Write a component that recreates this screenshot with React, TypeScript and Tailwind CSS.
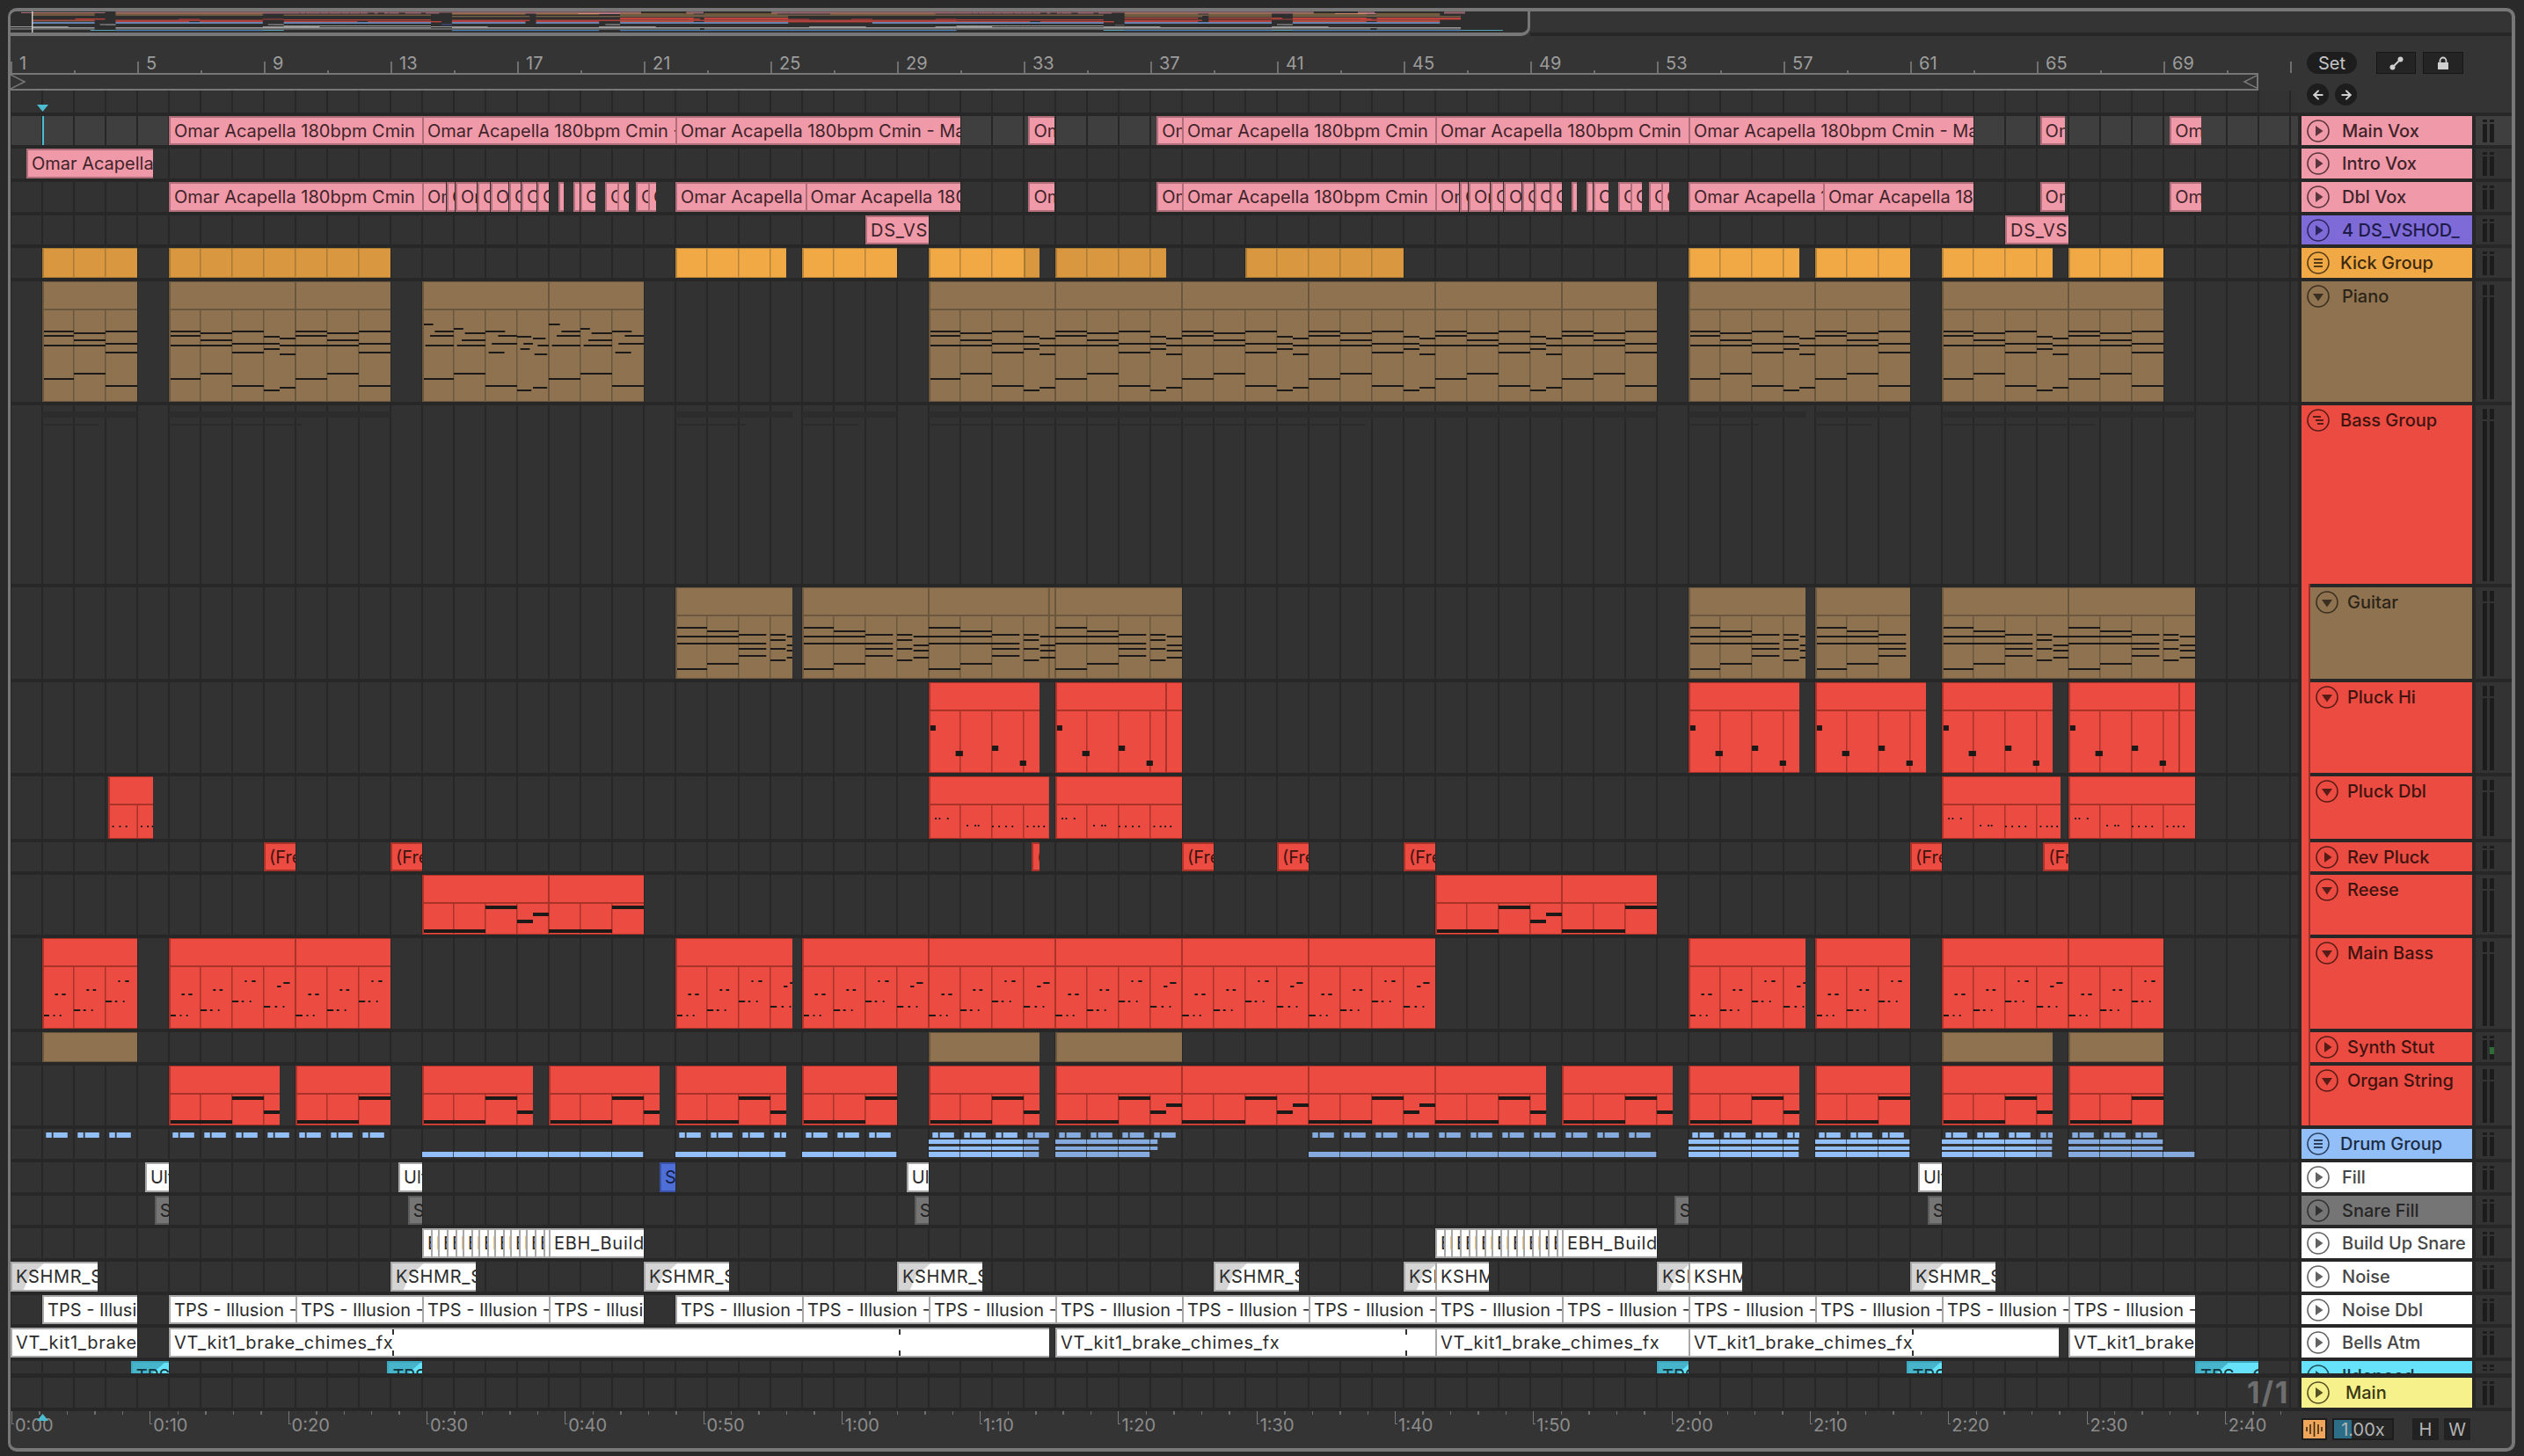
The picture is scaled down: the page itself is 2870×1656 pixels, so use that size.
import React from "react";
import { ArrowLeft, ArrowRight } from "lucide-react";

const BAR = 36;
const GRID =
  "bg-[linear-gradient(90deg,#272727_2px,transparent_2px)] bg-[length:36px_100%] bg-[position:-1px_0]";

type Note = [number, number, number];
type Clip = {
  s: number;
  e: number;
  t?: string;
  c: string;
  kind?: string;
  d?: number[];
  fade?: boolean;
  m?: number[];
};
type Track = {
  name: string;
  h: number;
  bg: string;
  fg: string;
  icon: "play" | "group" | "bass" | "down";
  child?: boolean;
  sel?: boolean;
  textMl?: string;
  ov?: number;
  clips: Clip[];
};

const PAL: Record<string, { cls: string; fill: string; line: string }> = {
  pink: { cls: "bg-[#f099a8] border-[#b06d7a] text-[#40242b]", fill: "#f099a8", line: "#b06d7a" },
  white: { cls: "bg-white border-[#a8a8a8] text-[#2c2c2c]", fill: "#d8d8d8", line: "#a8a8a8" },
  gray: { cls: "bg-[#757575] border-[#5c5c5c] text-[#222222]", fill: "#757575", line: "#5c5c5c" },
  blue: { cls: "bg-[#4f6fd8] border-[#3a52a8] text-[#14204a]", fill: "#4f6fd8", line: "#3a52a8" },
  cyan: { cls: "bg-[#66e3fb] border-[#3fa9bf] text-[#12343c]", fill: "#66e3fb", line: "#3fa9bf" },
  orange: { cls: "", fill: "#f0a945", line: "#b5843a" },
  dim: { cls: "", fill: "#d9983f", line: "#a87a34" },
  brown: { cls: "", fill: "#8f7350", line: "#6b573d" },
  red: { cls: "", fill: "#ec4b42", line: "#a93229" },
};

const aud = (c: string, t: string, rs: number[][], extra: Partial<Clip> = {}): Clip[] =>
  rs.map(([s, e]) => ({ s, e, t, c, ...extra }));
const mid = (c: string, kind: string, rs: (number | number[])[][]): Clip[] =>
  rs.map(([s, e, d]) => ({ s: s as number, e: e as number, c, kind, d: (d as number[]) || [] }));

const OM = "Omar Acapella 180bpm Cmin";
const fragPx = [
  [480, 507], [508, 517], [518, 542], [543, 557], [558, 578], [579, 592], [593, 610], [611, 624],
  [635, 641], [652, 659], [660, 677], [688, 702], [702, 715], [723, 737], [737, 746],
];
const fragBars = (shift: number) =>
  fragPx.map(([a, b]) => [(a + shift - 12) / BAR + 1, (b + shift - 12) / BAR + 1]);

const TPS = "TPS - Illusion - Original Mix";
const tpsBars: number[][] = [[2, 5], [6, 10], [10, 14], [14, 18], [18, 21]];
for (let b = 22; b < 70; b += 4) tpsBars.push([b, b + 4]);

const strips: number[][] = [];
[14, 46].forEach((st) => {
  const w = [10, 8, 10, 10, 8, 10, 8, 10, 8, 10, 8, 10, 8, 10, 10, 6];
  let x = 0;
  w.forEach((v) => {
    strips.push([st + x / BAR, st + (x + v) / BAR]);
    x += v;
  });
});

const TRACKS: Track[] = [
  {
    name: "Main Vox", h: 33, bg: "bg-[#f099a8]", fg: "text-[#40242b]", icon: "play", sel: true, ov: 0.5,
    clips: [
      ...aud("pink", OM, [[6, 14], [38, 46], [46, 54]]),
      ...aud("pink", OM + " - Main Vox", [[14, 22], [22, 31], [54, 63], [33.15, 33.97], [37.2, 38], [65.1, 65.9], [69.2, 70.2]]),
    ],
  },
  {
    name: "Intro Vox", h: 34, bg: "bg-[#f099a8]", fg: "text-[#40242b]", icon: "play", ov: 1,
    clips: aud("pink", "Omar Acapella 180bpm", [[1.5, 5.5]]),
  },
  {
    name: "Dbl Vox", h: 34, bg: "bg-[#f099a8]", fg: "text-[#40242b]", icon: "play", ov: 1.5,
    clips: [
      ...aud("pink", OM, [[6, 14], [38, 46]]),
      ...aud("pink", "Omar Acapella 180bpm", [[22, 26.1], [26.1, 31], [33.15, 33.97], [37.2, 38], [54, 58.25], [58.25, 63], [65.1, 65.9], [69.2, 70.2], ...fragBars(0), ...fragBars(1152)]),
    ],
  },
  {
    name: "4 DS_VSHOD_", h: 33, bg: "bg-[#7f6bd8]", fg: "text-[#1e1a4a]", icon: "play", ov: 2,
    clips: aud("pink", "DS_VSHOD", [[28, 30], [64, 66]]),
  },
  {
    name: "Kick Group", h: 34, bg: "bg-[#f0a945]", fg: "text-[#3d2a10]", icon: "group", ov: 2.5,
    clips: [
      ...mid("dim", "kick", [[2, 5], [6, 13], [33, 33.5], [34, 37.5], [40, 45]]),
      ...mid("orange", "kick", [[22, 25.5], [26, 29], [30, 33], [54, 57.5], [58, 61], [62, 65.5], [66, 69]]),
    ],
  },
  {
    name: "Piano", h: 137, bg: "bg-[#8f7350]", fg: "text-[#2c2418]", icon: "down", ov: 3.5,
    clips: mid("brown", "piano", [
      [2, 5], [6, 13, [10]], [14, 21, [18]], [30, 53, [34, 38, 42, 46, 50]], [54, 61, [58]], [62, 69, [66]],
    ]),
  },
  { name: "Bass Group", h: 203, bg: "bg-[#ec4b42]", fg: "text-[#3f1410]", icon: "bass", clips: [] },
  {
    name: "Guitar", h: 104, bg: "bg-[#8f7350]", fg: "text-[#2c2418]", icon: "down", child: true, ov: 5,
    clips: mid("brown", "guitar", [[22, 25.7], [26, 38, [30, 34, 33.8]], [54, 57.7], [58, 61], [62, 70, [66]]]),
  },
  {
    name: "Pluck Hi", h: 103, bg: "bg-[#ec4b42]", fg: "text-[#3f1410]", icon: "down", child: true, ov: 7,
    clips: mid("red", "pluckHi", [[30, 33.5], [34, 38, [37.5]], [54, 57.5], [58, 61.5], [62, 65.5], [66, 70, [69.5]]]),
  },
  {
    name: "Pluck Dbl", h: 71, bg: "bg-[#ec4b42]", fg: "text-[#3f1410]", icon: "down", child: true, ov: 8,
    clips: mid("red", "pluckDbl", [[4.07, 5.5], [30, 33.8], [34, 38], [62, 65.75], [66, 70]]),
  },
  {
    name: "Rev Pluck", h: 33, bg: "bg-[#ec4b42]", fg: "text-[#3f1410]", icon: "play", child: true, ov: 8.5,
    clips: aud("red2", "(Freeze) Rev Pluck", [[9, 10], [13, 14], [33.25, 33.5], [38, 39], [41, 42], [45, 46], [61, 62], [65.2, 66]]),
  },
  {
    name: "Reese", h: 68, bg: "bg-[#ec4b42]", fg: "text-[#3f1410]", icon: "down", child: true, ov: 9,
    clips: mid("red", "organ", [[14, 21, [18]], [46, 53, [50]]]),
  },
  {
    name: "Main Bass", h: 103, bg: "bg-[#ec4b42]", fg: "text-[#3f1410]", icon: "down", child: true, ov: 9.5,
    clips: mid("red", "bass", [[2, 5], [6, 13, [10]], [22, 25.7], [26, 46, [30, 34, 38, 42]], [54, 57.7], [58, 61], [62, 69, [66]]]),
  },
  {
    name: "Synth Stut", h: 34, bg: "bg-[#ec4b42]", fg: "text-[#3f1410]", icon: "play", child: true, ov: 10.5,
    clips: mid("brown", "plain", [[2, 5], [30, 33.5], [34, 38], [62, 65.5], [66, 69]]),
  },
  {
    name: "Organ String", h: 68, bg: "bg-[#ec4b42]", fg: "text-[#3f1410]", icon: "down", child: true, ov: 11,
    clips: mid("red", "organ", [
      [6, 9.5], [10, 13], [14, 17.5], [18, 21.5], [22, 25.5], [26, 29], [30, 33.5], [34, 49.5, [38, 42, 46]],
      [50, 53.5], [54, 57.5], [58, 61], [62, 65.5], [66, 69],
    ]),
  },
  { name: "Drum Group", h: 34, bg: "bg-[#93bff8]", fg: "text-[#1c2c44]", icon: "group", clips: [] },
  {
    name: "Fill", h: 34, bg: "bg-white", fg: "text-[#474747]", icon: "play", ov: 14.5,
    clips: [
      ...aud("white", "Ultra Fill", [[5.25, 6], [13.25, 14], [29.3, 30], [61.25, 62]]),
      ...aud("blue", "Snare", [[21.5, 22]]),
    ],
  },
  {
    name: "Snare Fill", h: 33, bg: "bg-[#757575]", fg: "text-[#262626]", icon: "play", ov: 15,
    clips: aud("gray", "Snare Fill", [[5.55, 6], [13.55, 14], [29.55, 30], [53.55, 54], [61.55, 62]]),
  },
  {
    name: "Build Up Snare", h: 34, bg: "bg-white", fg: "text-[#474747]", icon: "play", ov: 16,
    clips: [
      ...aud("white", "EBH", strips),
      ...aud("white", "EBH_BuildUp_Snare", [[18, 21], [50, 53]]),
    ],
  },
  {
    name: "Noise", h: 34, bg: "bg-white", fg: "text-[#474747]", icon: "play", ov: 17,
    clips: [
      ...aud("white", "KSHMR_Sweep", [[1, 3.75], [13, 15.7], [21, 23.7], [29, 31.7], [39, 41.7], [45, 46], [53, 54], [61, 63.7]], { fade: true }),
      ...aud("white", "KSHMR_Sweep", [[46, 47.7], [54, 55.7]]),
    ],
  },
  {
    name: "Noise Dbl", h: 33, bg: "bg-white", fg: "text-[#474747]", icon: "play", ov: 18,
    clips: aud("white", TPS, tpsBars),
  },
  {
    name: "Bells Atm", h: 34, bg: "bg-white", fg: "text-[#474747]", icon: "play", ov: 19.5,
    clips: [
      ...aud("white", "VT_kit1_brake_chimes_fx", [[1, 5], [46, 54], [66, 70]]),
      { s: 6, e: 33.8, t: "VT_kit1_brake_chimes_fx", c: "white", m: [13, 29] },
      { s: 34, e: 46, t: "VT_kit1_brake_chimes_fx", c: "white", m: [45] },
      { s: 54, e: 65.7, t: "VT_kit1_brake_chimes_fx", c: "white", m: [61] },
    ],
  },
  {
    name: "Ildeneed", h: 14, bg: "bg-[#66e3fb]", fg: "text-[#12343c]", icon: "play", ov: 21,
    clips: aud("cyan", "TPS - Cymbal", [[4.8, 6], [12.9, 14], [53, 54], [60.9, 62], [70, 72]], { fade: true }),
  },
];

const PIANO: Note[][] = [
  [[0, 1, 56], [0, 1, 61], [0, 1, 72], [0, 1, 110]],
  [[0, 1, 58], [0, 1, 66], [0, 1, 72], [0, 1, 104]],
  [[0, 1, 56], [0, 1, 70], [0, 1, 80], [0, 1, 118]],
  [[0, .5, 62], [0, .5, 70], [0, .5, 76], [0, .5, 123], [.5, .5, 64], [.5, .5, 72], [.5, .5, 82], [.5, .5, 120]],
];
const PIANO_ARP: Note[][] = [
  [[0, .35, 48], [.4, .6, 56], [.25, .75, 61], [.1, .9, 72], [0, 1, 110]],
  [[0, .3, 53], [.35, .65, 58], [.25, .75, 66], [.1, .9, 72], [0, 1, 104]],
  [[0, .62, 56], [.4, .6, 61], [.2, .8, 70], [.1, .5, 80], [0, 1, 118]],
  [[0, .45, 62], [.2, .3, 70], [.1, .3, 76], [0, .45, 123], [.5, .4, 64], [.65, .35, 72], [.55, .4, 82], [.5, .45, 120]],
];
const GUITAR: Note[][] = [
  [[0, 1, 45], [0, 1, 55], [0, 1, 63], [0, 1, 92]],
  [[0, 1, 49], [0, 1, 55], [0, 1, 63], [0, 1, 86]],
  [[0, .87, 53], [0, .87, 63], [0, .87, 69], [0, .87, 77]],
  [[0, .48, 53], [0, .48, 59], [0, .48, 69], [0, .48, 82], [.52, .48, 55], [.52, .48, 65], [.52, .48, 71], [.52, .48, 79]],
];
const PLUCK: Note[][] = [
  [[0, .22, 49]],
  [[-.15, .23, 78]],
  [[0, .2, 72]],
  [[-.12, .2, 89]],
];
const DOT = (y: number, xs: number[]): Note[] => xs.map((x) => [x, .05, y] as Note);
const PLUCKDBL: Note[][] = [
  [...DOT(47, [.2, .32, .58])],
  [...DOT(55, [.2, .45, .55])],
  [...DOT(56, [0, .2, .42, .62])],
  [...DOT(56, [.1, .3, .45, .62])],
];
const BASS: Note[][] = [
  [[0, .22, 87], [.35, .05, 87], [.55, .05, 87], [.4, .1, 63], [.62, .12, 63]],
  [[0, .2, 81], [.3, .08, 81], [.55, .05, 81], [.4, .08, 58], [.6, .1, 58]],
  [[0, .2, 71], [.3, .07, 71], [.55, .05, 71], [.4, .06, 48], [.62, .12, 48]],
  [[0, .2, 77], [.35, .07, 77], [.6, .05, 77], [.42, .12, 54], [.62, .2, 50]],
];
const ORGAN: Note[][] = [
  [[0, 1, 62]],
  [[0, 1, 62]],
  [[0, 1, 35]],
  [[0, .5, 51], [.5, .5, 43]],
];

function notesFor(kind: string, bar: number): { n: Note[]; h: number } {
  const i = (((bar - 2) % 4) + 4) % 4;
  const arp = bar >= 14 && bar < 22;
  if (kind === "piano") return { n: (arp ? PIANO_ARP : PIANO)[i], h: 2 };
  if (kind === "guitar") return { n: GUITAR[i], h: 2 };
  if (kind === "pluckHi") return { n: PLUCK[i], h: 6 };
  if (kind === "pluckDbl") return { n: PLUCKDBL[i], h: 2 };
  if (kind === "bass") return { n: BASS[i], h: 2 };
  if (kind === "organ") return { n: ORGAN[i], h: 4 };
  return { n: [], h: 0 };
}

function MidiClip({ c, h }: { c: Clip; h: number }) {
  const p = PAL[c.c];
  const w = (c.e - c.s) * BAR;
  const kind = c.kind || "plain";
  const titled = kind !== "kick" && kind !== "plain";
  const title = 31;
  const bars: number[] = [];
  for (let b = Math.floor(c.s); b < c.e; b++) if (b > c.s) bars.push(b);
  const rects: React.ReactNode[] = [];
  for (let b = Math.floor(c.s) - 1; b <= Math.ceil(c.e); b++) {
    const { n, h: nh } = notesFor(kind, b);
    n.forEach((v, i) =>
      rects.push(
        <rect key={`${b}-${i}`} x={(b - c.s + v[0]) * BAR} y={v[2]} width={v[1] * BAR} height={nh} fill="#1c1a18" />
      )
    );
  }
  return (
    <svg
      className="absolute top-0 block overflow-hidden"
      width={w}
      height={h}
      style={{ left: (c.s - 1) * BAR }}
    >
      <rect width={w} height={h} fill={p.fill} />
      <rect width={w} height={1} fill={p.line} />
      <rect y={h - 1} width={w} height={1} fill={p.line} />
      {titled && <rect y={title} width={w} height={2} fill={p.line} />}
      {(titled || kind === "kick") &&
        bars.map((b) => (
          <rect key={b} x={(b - c.s) * BAR - 1} y={titled ? title : 0} width={1.5} height={h} fill={p.line} />
        ))}
      {(c.d || []).map((b) => (
        <rect key={`d${b}`} x={(b - c.s) * BAR - 1} y={0} width={2} height={h} fill={p.line} />
      ))}
      {rects}
      <rect width={2} height={h} fill={p.line} />
    </svg>
  );
}

function AudioClip({ c, h }: { c: Clip; h: number }) {
  const isRed = c.c === "red2";
  const cls = isRed ? "bg-[#ec4b42] border-[#a93229] text-[#3f1410]" : PAL[c.c].cls;
  const w = (c.e - c.s) * BAR;
  const wide = (c.t || "").includes("_");
  return (
    <div
      className={`absolute top-0 flex items-center overflow-hidden whitespace-nowrap border-l-2 border-y-2 pl-[4px] text-[20px] ${cls} ${wide ? "tracking-[0.7px]" : ""}`}
      style={{ left: (c.s - 1) * BAR, width: w, height: h }}
    >
      {c.fade && (
        <svg className="absolute left-0 top-0" width={36} height={34}>
          <polygon points="0,0 36,0 20,14 11,34 0,34" fill={c.c === "cyan" ? "#46b4ca" : "#d4d4d4"} />
        </svg>
      )}
      <span className="relative block min-w-0 overflow-hidden">{c.t}</span>
      {(c.m || []).map((b) => (
        <React.Fragment key={b}>
          <span className="absolute top-0 h-[6px] w-[2px] bg-[#333333]" style={{ left: (b - c.s) * BAR }} />
          <span className="absolute bottom-0 h-[6px] w-[2px] bg-[#333333]" style={{ left: (b - c.s) * BAR }} />
        </React.Fragment>
      ))}
    </div>
  );
}

function Icon({ kind }: { kind: Track["icon"] }) {
  return (
    <svg width={26} height={26} viewBox="0 0 26 26" className="shrink-0 opacity-85">
      <circle cx={13} cy={13} r={12} fill="none" stroke="currentColor" strokeWidth={1.6} />
      {kind === "play" && <polygon points="10,7 10,19 18.5,13" fill="currentColor" />}
      {kind === "down" && <polygon points="7,10 19,10 13,18.5" fill="currentColor" />}
      {kind === "group" && (
        <path d="M8 9h10M8 13h10M8 17h10" stroke="currentColor" strokeWidth={1.8} fill="none" />
      )}
      {kind === "bass" && (
        <path d="M7 9h9M10 13h9M12 17h7" stroke="currentColor" strokeWidth={1.8} fill="none" />
      )}
    </svg>
  );
}

function Header({ t }: { t: Track }) {
  const textH = t.h > 40 || t.h < 30 ? 34 : t.h;
  return (
    <div className={`relative w-[194px] shrink-0 ${t.bg} ${t.fg}`}>
      <div className="h-full overflow-hidden">
        <div
          className={`flex items-center text-[20px] font-medium whitespace-nowrap ${t.child ? "ml-[16px]" : "ml-[6px]"}`}
          style={{ height: textH }}
        >
          <Icon kind={t.icon} />
          <span className={t.child ? "ml-[10px]" : t.textMl ? t.textMl : t.icon === "play" || t.icon === "down" ? "ml-[14px]" : "ml-[12px]"}>
            {t.name}
          </span>
        </div>
      </div>
      {t.child && (
        <div className="absolute -top-[4px] bottom-0 left-0 w-[10px] border-r-2 border-[#9c2f27] bg-[#ec4b42]" />
      )}
    </div>
  );
}

function Meter({ h, sel, green }: { h: number; sel?: boolean; green?: boolean }) {
  const tall = h > 40;
  const bar = (g: boolean) => (
    <div className="flex h-full w-[5px] flex-col gap-[2px]">
      <div className={`shrink-0 bg-[#1c1c1c] ${tall ? "h-[12px]" : "h-[3px]"}`} />
      <div className="flex flex-1 flex-col justify-end bg-[#1c1c1c]">
        {g && <div className="mb-[6px] h-[8px] bg-[#2f6b35]" />}
      </div>
    </div>
  );
  return (
    <div className={`flex w-[42px] shrink-0 gap-[3px] overflow-hidden pl-[8px] pt-[4px] pb-[3px] ${sel ? "bg-[#3f3f3f]" : "bg-[#333333]"}`}>
      {bar(false)}
      {bar(!!green)}
    </div>
  );
}

function Ghost() {
  const spans: number[][] = [[2, 5], [6, 13], [22, 25.7], [26, 29], [30, 53], [54, 57.7], [58, 61], [62, 70]];
  return (
    <svg className="absolute left-0 top-0" width={2601} height={30}>
      {spans.map(([a, b]) => (
        <React.Fragment key={a}>
          <rect x={(a - 1) * BAR} y={7} width={(b - a) * BAR} height={7} fill="#2c2c2c" />
          <rect x={(a - 1) * BAR} y={21} width={(b - a) * BAR * 0.6} height={2} fill="#2b2b2b" />
        </React.Fragment>
      ))}
    </svg>
  );
}

function Row({ t }: { t: Track }) {
  return (
    <div className="flex gap-[4px]" style={{ height: t.h }}>
      <div className={`relative w-[2601px] shrink-0 overflow-hidden ${GRID} ${t.sel ? "bg-[#3f3f3f]" : "bg-[#323232]"}`}>
        {t.name === "Drum Group" && <Drums />}
        {t.name === "Bass Group" && <Ghost />}
        {t.clips.map((c, i) =>
          c.kind ? <MidiClip key={i} c={c} h={t.h} /> : <AudioClip key={i} c={c} h={Math.max(t.h, 33)} />
        )}
        {t.sel && <div className="absolute left-[36px] top-0 h-full w-[1.5px] bg-[#4cbcd0]" />}
      </div>
      <Header t={t} />
      <Meter h={t.h} sel={t.sel} green={t.name === "Synth Stut"} />
    </div>
  );
}

function Drums() {
  const rs: React.ReactNode[] = [];
  const bright = (b: number) => !(b >= 33 && b < 54) && !(b >= 61 && b < 62) && !(b >= 65 && b < 70);
  const add = (k: string, s: number, e: number, y: number, h: number) =>
    rs.push(
      <rect key={k} x={(s - 1) * BAR} y={y} width={(e - s) * BAR} height={h} fill={bright(s) ? "#93bff8" : "#84aade"} />
    );
  const lane1: number[][] = [[2, 5], [6, 13], [22, 25.5], [26, 29], [30, 38], [42, 53], [54, 57.5], [58, 61], [62, 65.5], [66, 69]];
  lane1.forEach(([a, b]) => {
    for (let x = a; x < b; x++) {
      const end = Math.min(x + 1, b);
      add(`a${x}`, x + 0.12, Math.min(x + 0.3, end), 4, 6);
      if (x + 0.35 < end) add(`b${x}`, x + 0.35, Math.min(x + 0.8, end), 4, 6);
    }
  });
  const lane23: number[][] = [[30, 33.5], [34, 37.25], [54, 57.5], [58, 61], [62, 65.5], [66, 69]];
  lane23.forEach(([a, b]) => {
    for (let x = a; x < b; x++) {
      const end = Math.min(x + 1, b);
      add(`c${x}`, x, end - 0.02, 12, 5);
      add(`d${x}`, x, end - 0.02, 20, 4);
    }
  });
  const lane4: number[][] = [[14, 21], [22, 25.5], [26, 29], [30, 33.5], [34, 37], [42, 53], [54, 57.5], [58, 61], [62, 65.5], [66, 70]];
  lane4.forEach(([a, b]) => {
    for (let x = a; x < b; x++) add(`e${x}`, x, Math.min(x + 1, b) - 0.02, 26, 6);
  });
  return (
    <svg className="absolute left-0 top-0" width={2601} height={34}>
      {rs}
    </svg>
  );
}

function Overview() {
  const sx = 23.9 / BAR;
  const rows: React.ReactNode[] = [];
  TRACKS.forEach((t, ti) => {
    if (t.ov === undefined) return;
    t.clips.forEach((c, i) => {
      const col = c.c === "red2" ? "#ec4b42" : PAL[c.c].fill;
      rows.push(
        <rect
          key={`${ti}-${i}`}
          x={(c.s - 1) * BAR * sx}
          y={t.ov}
          width={(c.e - c.s) * BAR * sx}
          height={t.h > 60 ? 1.4 : 0.9}
          fill={col}
          opacity={0.72}
        />
      );
    });
  });
  const blue: number[][] = [[2, 5], [6, 13], [14, 21], [22, 25.5], [26, 29], [30, 38], [42, 53], [54, 61], [62, 69]];
  blue.forEach(([a, b], i) =>
    rows.push(
      <rect key={`bl${i}`} x={(a - 1) * BAR * sx} y={12} width={(b - a) * BAR * sx} height={2} fill="#6f96cc" opacity={0.8} />
    )
  );
  const lower: number[][] = [[6, 13], [22, 29], [30, 38], [38, 46], [54, 61], [62, 70]];
  lower.forEach(([a, b], i) =>
    rows.push(
      <rect key={`lw${i}`} x={(a - 1) * BAR * sx} y={21} width={(b - a) * BAR * sx} height={1.2} fill="#4c7fb8" />
    )
  );
  return (
    <svg width={1725} height={24} className="block">
      {rows}
      <rect x={24} width={1.5} height={24} fill="#c8c8c8" />
    </svg>
  );
}

function BarRuler() {
  const labels: number[] = [];
  for (let b = 1; b <= 69; b += 4) labels.push(b);
  const minor: number[] = [];
  for (let b = 3; b <= 71; b += 4) minor.push(b);
  return (
    <div className="flex w-[2601px] shrink-0 flex-col">
      <div className="relative h-[42px] overflow-hidden">
        {[...labels, 73].map((b) => (
          <div key={b} className="absolute bottom-0 h-[13px] w-[2px] bg-[#6f6f6f]" style={{ left: (b - 1) * BAR }} />
        ))}
        {minor.map((b) => (
          <div key={b} className="absolute bottom-0 h-[3px] w-[2px] bg-[#6f6f6f]" style={{ left: (b - 1) * BAR }} />
        ))}
        {labels.map((b) => (
          <span key={b} className="absolute top-[18px] text-[20px] leading-[26px] text-[#9c9c9c]" style={{ left: (b - 1) * BAR + 10 }}>
            {b}
          </span>
        ))}
      </div>
      <div className="flex h-[20px] w-[2556px] items-center justify-between border-y-2 border-[#777777]">
        <svg width={18} height={16}>
          <path d="M0 0L16 8L0 16" fill="none" stroke="#777777" strokeWidth={1.5} />
        </svg>
        <svg width={18} height={16}>
          <path d="M18 0L2 8L18 16" fill="none" stroke="#777777" strokeWidth={1.5} />
          <rect x={16} width={2} height={16} fill="#777777" />
        </svg>
      </div>
      <div className={`relative h-[25px] ${GRID} bg-[#333333]`}>
        <svg className="absolute left-[30px] top-[16px]" width={13} height={8}>
          <polygon points="0,0 13,0 6.5,8" fill="#4cbcd0" />
        </svg>
      </div>
    </div>
  );
}

function TimeRuler() {
  const lab: string[] = [];
  for (let i = 0; i <= 16; i++) lab.push(`${Math.floor(i / 6)}:${i % 6}0`);
  const ticks: number[] = [];
  for (let i = 0; i < 83; i++) if (i % 5) ticks.push(i);
  return (
    <div className="relative h-[42px] w-[2601px] shrink-0 overflow-hidden">
      {ticks.map((i) => (
        <div key={i} className="absolute top-0 h-[4px] w-[1.5px] bg-[#6f6f6f]" style={{ left: 1 + i * 31.46 }} />
      ))}
      {lab.map((l, i) => (
        <div key={l} className="absolute top-0 h-[15px] w-[3px] border-b border-l border-[#777777]" style={{ left: 1 + i * 157.3 }} />
      ))}
      {lab.map((l, i) => (
        <span key={l} className="absolute top-[3px] text-[20px] leading-[26px] text-[#8c8c8c]" style={{ left: 5 + i * 157.3 }}>
          {l}
        </span>
      ))}
      <svg className="absolute left-[30px] top-[3px]" width={13} height={8}>
        <polygon points="6.5,0 13,8 0,8" fill="#4cbcd0" />
      </svg>
    </div>
  );
}

function Controls() {
  return (
    <div className="flex flex-col gap-[11px] pl-[10px] pt-[18px]">
      <div className="flex items-center">
        <div className="flex h-[25px] w-[57px] items-center justify-center rounded-full bg-[#1d1d1d] text-[20px] leading-none text-[#c4c4c4]">
          Set
        </div>
        <div className="ml-[22px] flex h-[25px] w-[45px] items-center justify-center border border-[#161616] bg-[#242424]">
          <svg width={16} height={16} viewBox="0 0 16 16">
            <path d="M3 13L13 3" stroke="#cfcfcf" strokeWidth={2} />
            <circle cx={3.5} cy={12.5} r={3} fill="#cfcfcf" />
            <circle cx={12.5} cy={3.5} r={3} fill="#cfcfcf" />
          </svg>
        </div>
        <div className="ml-[8px] flex h-[25px] w-[46px] items-center justify-center border border-[#161616] bg-[#242424]">
          <svg width={16} height={16} viewBox="0 0 16 16">
            <path d="M4.5 7V5a3.5 3.5 0 017 0v2" fill="none" stroke="#cfcfcf" strokeWidth={1.8} />
            <rect x={2} y={7} width={12} height={8} fill="#cfcfcf" />
          </svg>
        </div>
      </div>
      <div className="flex gap-[7px]">
        <div className="flex h-[25px] w-[25px] items-center justify-center rounded-full bg-[#1d1d1d] text-[#d0d0d0]">
          <ArrowLeft size={16} strokeWidth={3} />
        </div>
        <div className="flex h-[25px] w-[25px] items-center justify-center rounded-full bg-[#1d1d1d] text-[#d0d0d0]">
          <ArrowRight size={16} strokeWidth={3} />
        </div>
      </div>
    </div>
  );
}

function BottomButtons() {
  return (
    <div className="flex items-start gap-[6px] pl-[4px] pt-[8px]">
      <div className="flex h-[25px] w-[29px] items-center justify-center border-2 border-[#1d1d1d] bg-[#f0a65a]">
        <svg width={21} height={19}>
          <path d="M2 7v5M6 4v11M10.500 1v17M15 4v11M19 7v5" stroke="#3a2a14" strokeWidth={1.6} />
        </svg>
      </div>
      <div className="relative flex h-[25px] w-[70px] items-center justify-center border-2 border-[#1d1d1d] bg-[#262626] text-[20px] text-[#b4b4b4]">
        <div className="absolute bottom-0 left-0 top-0 w-[20px] bg-[#2c6d88]" />
        <span className="relative">1.00x</span>
      </div>
      <div className="ml-[15px] flex h-[25px] w-[30px] items-center justify-center bg-[#222222] text-[20px] text-[#b4b4b4]">H</div>
      <div className="flex h-[25px] w-[30px] items-center justify-center bg-[#222222] text-[20px] text-[#b4b4b4]">W</div>
    </div>
  );
}

export default function App() {
  const main: Track = {
    name: "Main", h: 34, bg: "bg-[#f6f18a]", fg: "text-[#3a3814]", icon: "play", textMl: "ml-[18px]", clips: [],
  };
  return (
    <div className="h-[1656px] w-[2870px] overflow-hidden bg-[#2a2a2a] pl-[9px] pt-[9px] font-['Inter',sans-serif]">
      <div className="flex h-[1642px] w-[2851px] flex-col overflow-hidden rounded-[10px] border-[3px] border-b-4 border-t-4 border-r-4 border-[#777777] bg-[#343434]">
        <div className="flex h-[28px] shrink-0">
          <div className="h-[28px] w-[1728px] shrink-0 overflow-hidden rounded-br-[10px] border-b-4 border-r-[3px] border-[#777777] bg-[#2e2e2e]">
            <Overview />
          </div>
          <div className="flex-1 border-b-4 border-[#272727]" />
        </div>
        <div className="flex h-[87px] shrink-0">
          <BarRuler />
          <Controls />
        </div>
        <div className="flex flex-col gap-[4px] border-t-4 border-b-4 border-[#272727] bg-[#272727]">
          {TRACKS.map((t) => (
            <Row key={t.name} t={t} />
          ))}
          <div className="relative mt-[1px]">
            <Row t={main} />
            <span className="absolute left-[2543px] top-0 text-[34px] font-bold leading-[34px] tracking-[2px] text-[#6e6e6e]">1/1</span>
          </div>
        </div>
        <div className="flex">
          <TimeRuler />
          <BottomButtons />
        </div>
      </div>
    </div>
  );
}
